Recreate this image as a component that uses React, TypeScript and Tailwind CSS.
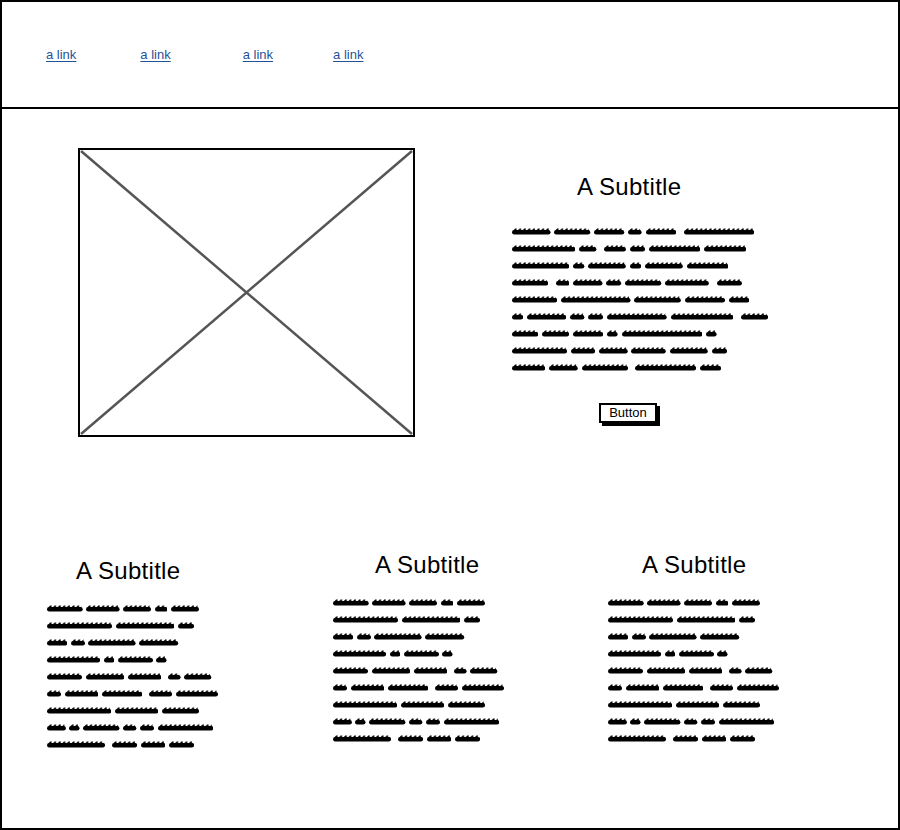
import React from "react";

const RIGHT_LINES = [
  "Lorem ipsum dolor sit amet, consectetur",
  "adipisicing elit, sed do eiusmod tempor",
  "incididunt ut labore et dolore magna",
  "aliqua. Ut enim ad minim veniam, quis",
  "nostrud exercitation ullamco laboris nisi",
  "ut aliquip ex ea commodo consequat. Duis",
  "aute irure dolor in reprehenderit in",
  "voluptate velit esse cillum dolore eu",
  "fugiat nulla pariatur. Excepteur sint",
];

const BOTTOM_LINES = [
  "Lorem ipsum dolor sit amet,",
  "consectetur adipisicing elit,",
  "sed do eiusmod tempor",
  "incididunt ut labore et",
  "dolore magna aliqua. Ut enim",
  "ad minim veniam, quis nostrud",
  "exercitation ullamco laboris",
  "nisi ut aliquip ex ea commodo",
  "consequat. Duis aute irure",
];

function ScribbleLine({ text }: { text: string }) {
  const tokens = text.match(/[A-Za-z]+|[^A-Za-z]+/g) || [];
  return (
    <div className="h-[17px] leading-[17px] whitespace-pre text-transparent select-none">
      {tokens.map((t, i) =>
        /[A-Za-z]/.test(t) ? (
          <span key={i} className="relative inline-block">
            {t}
            <svg className="absolute left-0 top-[4px] w-full h-[9px]" aria-hidden="true">
              <rect x="0" y="3" width="100%" height="4.4" rx="2.2" fill="#000" />
              <rect x="1.5" y="1" width="calc(100% - 3px)" height="3" fill="url(#bumps)" />
            </svg>
          </span>
        ) : (
          <span key={i}>{t}</span>
        )
      )}
    </div>
  );
}

function Scribble({ lines, size }: { lines: string[]; size: "right" | "bottom" }) {
  return (
    <div className={size === "right" ? "text-[13.6px]" : "text-[12.6px]"}>
      {lines.map((l, i) => (
        <ScribbleLine key={i} text={l} />
      ))}
    </div>
  );
}

function Subtitle({ className }: { className: string }) {
  return (
    <h2 className={"text-[24px] leading-[28px] tracking-[0.3px] text-black whitespace-nowrap " + className}>
      A Subtitle
    </h2>
  );
}

function NavLink({ className }: { className: string }) {
  return (
    <a
      href="#"
      className={
        "text-[13px] text-[#1f5299] underline decoration-[#1f5299] underline-offset-2 " + className
      }
    >
      a link
    </a>
  );
}

export default function App() {
  return (
    <div className="w-[900px] h-[830px] border-2 border-black bg-white flex flex-col font-['Liberation_Sans',Arial,sans-serif] text-black overflow-hidden">
      <svg width="0" height="0" className="absolute" aria-hidden="true">
        <defs>
          <pattern id="bumps" x="1" y="1" width="4.6" height="3" patternUnits="userSpaceOnUse">
            <path d="M-0.5 3 L2.6 0.3 Q3.2 0 3.4 0.6 L3.6 3 Z" fill="#000" />
          </pattern>
        </defs>
      </svg>

      <header className="h-[107px] border-b-2 border-black flex items-center shrink-0">
        <NavLink className="ml-[44px]" />
        <NavLink className="ml-[64px]" />
        <NavLink className="ml-[72px]" />
        <NavLink className="ml-[60px]" />
      </header>

      <div className="flex h-[441px] shrink-0 items-start">
        <div className="ml-[76px] mt-[39px] w-[337px] h-[289px] border-2 border-black relative shrink-0">
          <svg className="absolute inset-0" width="333" height="285" aria-hidden="true">
            <line x1="1" y1="1" x2="332" y2="284" stroke="#555" strokeWidth="2.5" />
            <line x1="332" y1="1" x2="1" y2="284" stroke="#555" strokeWidth="2.5" />
          </svg>
        </div>
        <div className="ml-[97px] mt-[64px] flex flex-col items-start w-[270px]">
          <Subtitle className="ml-[65px]" />
          <div className="mt-[22px]">
            <Scribble lines={RIGHT_LINES} size="right" />
          </div>
          <button className="ml-[87px] mt-[27px] w-[58px] h-[20px] border-2 border-black bg-white text-[13px] leading-[16px] text-black shadow-[3px_3px_0_#000]">
            Button
          </button>
        </div>
      </div>

      <div className="flex items-start">
        <div className="ml-[45px] mt-[7px] w-[170px] flex flex-col items-start shrink-0">
          <Subtitle className="ml-[29px]" />
          <div className="mt-[15px]">
            <Scribble lines={BOTTOM_LINES} size="bottom" />
          </div>
        </div>
        <div className="ml-[116px] mt-[1px] w-[170px] flex flex-col items-start shrink-0">
          <Subtitle className="ml-[42px]" />
          <div className="mt-[15px]">
            <Scribble lines={BOTTOM_LINES} size="bottom" />
          </div>
        </div>
        <div className="ml-[105px] mt-[1px] w-[190px] flex flex-col items-start shrink-0">
          <Subtitle className="ml-[34px]" />
          <div className="mt-[15px]">
            <Scribble lines={BOTTOM_LINES} size="bottom" />
          </div>
        </div>
      </div>
    </div>
  );
}
